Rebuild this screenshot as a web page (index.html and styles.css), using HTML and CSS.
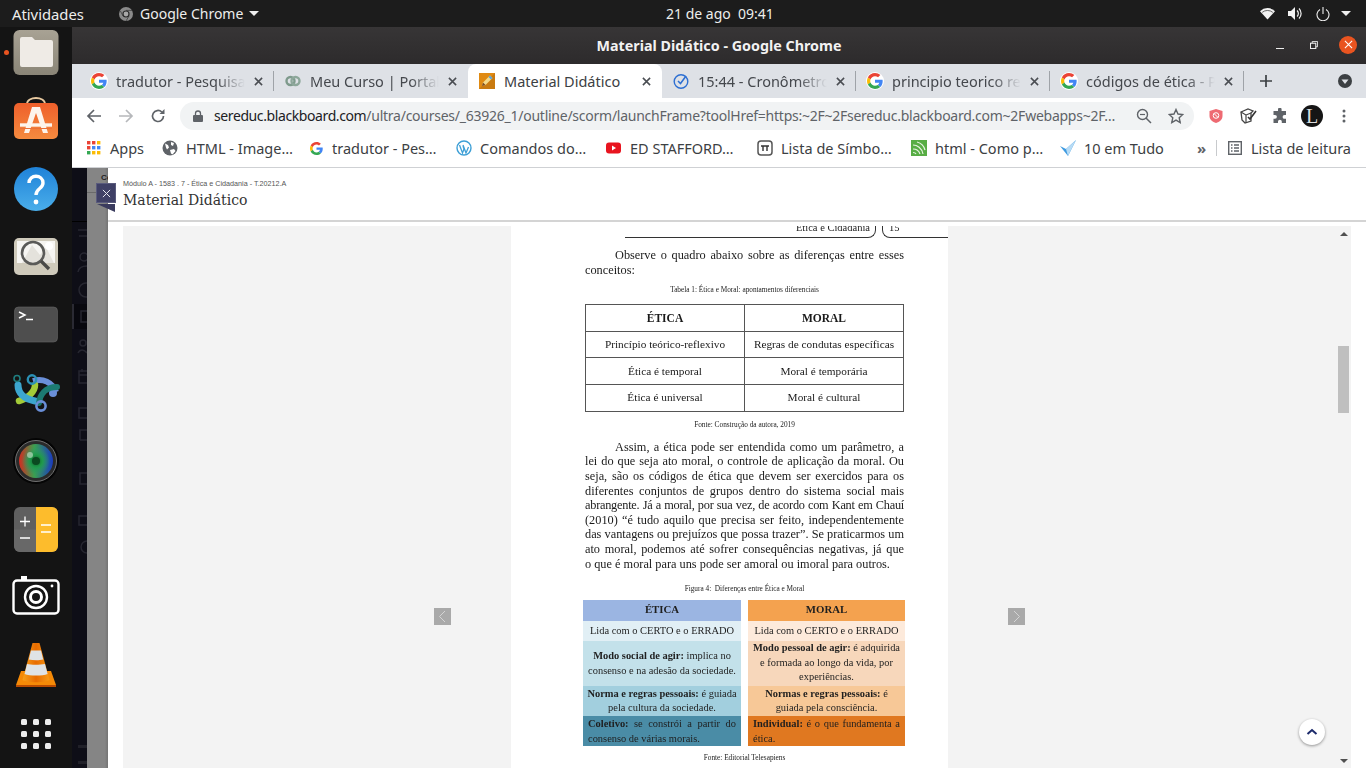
FILE: index.html
```html
<!DOCTYPE html>
<html lang="pt-BR">
<head>
<meta charset="utf-8">
<title>Material Didático - Google Chrome</title>
<link rel="stylesheet" href="styles.css">
</head>
<body>
<svg class="defs" aria-hidden="true">
  <symbol id="g" viewBox="0 0 48 48">
    <path fill="#EA4335" d="M24 9.5c3.54 0 6.71 1.22 9.21 3.6l6.85-6.85C35.9 2.38 30.47 0 24 0 14.62 0 6.51 5.38 2.56 13.22l7.98 6.19C12.43 13.72 17.74 9.5 24 9.5z"/>
    <path fill="#4285F4" d="M46.98 24.55c0-1.57-.15-3.09-.38-4.55H24v9.02h12.94c-.58 2.96-2.26 5.48-4.78 7.18l7.73 6c4.51-4.18 7.09-10.36 7.09-17.65z"/>
    <path fill="#FBBC05" d="M10.53 28.59c-.48-1.45-.76-2.99-.76-4.59s.27-3.14.76-4.59l-7.98-6.19C.92 16.46 0 20.12 0 24c0 3.88.92 7.54 2.56 10.78l7.97-6.19z"/>
    <path fill="#34A853" d="M24 48c6.48 0 11.93-2.13 15.89-5.81l-7.73-6c-2.15 1.45-4.92 2.3-8.16 2.3-6.26 0-11.57-4.22-13.47-9.91l-7.98 6.19C6.51 42.62 14.62 48 24 48z"/>
  </symbol>
  <symbol id="x" viewBox="0 0 10 10"><path d="M1 1l8 8M9 1l-8 8" stroke="#4a4d52" stroke-width="1.7" fill="none"/></symbol>
</svg>

<header class="topbar">
  <span class="activities">Atividades</span>
  <span class="appmenu">
    <svg class="chrome-mono" viewBox="0 0 14 14"><circle cx="7" cy="7" r="7" fill="#8a8a8a"/><circle cx="7" cy="7" r="3.6" fill="#2a2a2a"/><circle cx="7" cy="7" r="2.4" fill="#a8a8a8"/><path d="M7 3.4h6M4 9l-2.6-5M10 9l-3 5" stroke="#333" stroke-width=".7"/></svg>
    <span>Google Chrome</span>
    <i class="caret"></i>
  </span>
  <span class="clock">21 de ago&nbsp;&nbsp;09:41</span>
  <span class="status">
    <svg class="st-wifi" viewBox="0 0 16 13"><path d="M0 4a11.500 11.500 0 0 1 16 0l-8 9z" fill="#f2f2f2"/><path d="M2.300 5.300a9 9 0 0 1 11.400 0" stroke="#1d1d1d" stroke-width=".7" fill="none"/></svg>
    <svg class="st-vol" viewBox="0 0 15 13"><path d="M0 4h3l4-4v13l-4-4H0z" fill="#f2f2f2"/><path d="M9 3.500a4 4 0 0 1 0 6M11 1.500a7 7 0 0 1 0 10" stroke="#f2f2f2" stroke-width="1.200" fill="none"/></svg>
    <svg class="st-pow" viewBox="0 0 14 14"><path d="M4 2.500a6 6 0 1 0 6 0" stroke="#eee" stroke-width="1.100" fill="none"/><path d="M7 0v7" stroke="#eee" stroke-width="1.100"/></svg>
    <i class="caret"></i>
  </span>
</header>

<div class="desktop">
  <nav class="dock">
    <i class="running-dot"></i>
    <svg class="dock-ic" viewBox="0 0 48 48"><defs><linearGradient id="fl" x1="0" y1="0" x2="0" y2="1"><stop offset="0" stop-color="#a8a294"/><stop offset="1" stop-color="#8a8577"/></linearGradient></defs><rect x="1.500" y="1" width="45" height="45" rx="6" fill="url(#fl)"/><path d="M8 10a2 2 0 0 1 2-2h10l3 3h16a2 2 0 0 1 2 2v23a2 2 0 0 1-2 2H10a2 2 0 0 1-2-2z" fill="#efebe6"/></svg>
    <svg class="dock-ic" viewBox="0 0 48 48"><defs><linearGradient id="sw" x1="0" y1="0" x2="0" y2="1"><stop offset="0" stop-color="#ee5f2b"/><stop offset="1" stop-color="#f58b3f"/></linearGradient></defs><g transform="translate(0,-3)"><path d="M15 10c0-8 18-8 18 0" stroke="#e8c9a0" stroke-width="1.800" fill="none"/><rect x="2" y="9" width="44" height="36" rx="5" fill="url(#sw)"/><path d="M20 13h8l8 26h-5l-7-20-7 20h-5z" fill="#fdf4ec"/><path d="M8 31h32" stroke="#fdf4ec" stroke-width="3.400"/><path d="M8 34.500h32" stroke="#e9713a" stroke-width="1"/></g></svg>
    <svg class="dock-ic" viewBox="0 0 48 48"><defs><linearGradient id="hp" x1="0" y1="0" x2="0" y2="1"><stop offset="0" stop-color="#1f82d8"/><stop offset="1" stop-color="#4aaeea"/></linearGradient></defs><circle cx="24" cy="24" r="22" fill="url(#hp)"/><path d="M17 18c0-9 14-9 14 0 0 6-7 5-7 12" stroke="#fff" stroke-width="3.400" fill="none"/><circle cx="24" cy="37" r="2.400" fill="#fff"/></svg>
    <svg class="dock-ic" viewBox="0 0 48 48"><rect x="2" y="5" width="44" height="37" rx="5" fill="#cfcabb"/><path d="M5 8h38v22H5z" fill="#f6f5f2"/><path d="M10 30l10-18 8 10 6-8 8 16z" fill="#e4e2dc"/><circle cx="37" cy="13" r="4" fill="#fff"/><circle cx="21" cy="20" r="11" fill="none" stroke="#5a5a58" stroke-width="2.600"/><path d="M29 28l8 8" stroke="#4a4a48" stroke-width="3.400"/></svg>
    <svg class="dock-ic" viewBox="0 0 48 48"><rect x="2.500" y="6" width="43" height="35" rx="4" fill="#4e4e4e" stroke="#666" stroke-width=".6"/><path d="M7 11l6 3-6 3" stroke="#fff" stroke-width="1.500" fill="none"/><path d="M14 18.500h7" stroke="#fff" stroke-width="1.500"/></svg>
    <svg class="dock-ic" viewBox="0 0 48 48"><path d="M21 12c10-3 19 1 23 11" stroke="#6a8fd8" stroke-width="6" fill="none"/><circle cx="41" cy="24" r="4" fill="#6a8fd8"/><path d="M23 16c0 7-8 14-16 16" stroke="#a3cb38" stroke-width="6.500" stroke-linecap="round" fill="none"/><path d="M6 16c0 8 6 14 17 16" stroke="#3ca6cf" stroke-width="7" stroke-linecap="round" fill="none"/><path d="M45 18c-12 0-17 8-18 16" stroke="#1c7b72" stroke-width="6" stroke-linecap="round" fill="none"/><circle cx="5" cy="9.500" r="3" fill="none" stroke="#1f7f80" stroke-width="1.600"/><circle cx="20" cy="10.500" r="4.200" fill="none" stroke="#2b90b5" stroke-width="2.400"/><circle cx="29" cy="37" r="4.600" fill="none" stroke="#6a8fd8" stroke-width="2.600"/></svg>
    <svg class="dock-ic" viewBox="0 0 48 48"><defs><radialGradient id="ln" cx=".5" cy=".5" r=".5"><stop offset="0" stop-color="#0c5a26"/><stop offset=".45" stop-color="#1f9a4a"/><stop offset="1" stop-color="#2a9a70" stop-opacity="0"/></radialGradient><linearGradient id="lr" x1="0" y1="0" x2="1" y2="0"><stop offset="0" stop-color="#d42a20"/><stop offset=".45" stop-color="#3aa050"/><stop offset="1" stop-color="#1a3ac0"/></linearGradient></defs><circle cx="24" cy="24" r="23" fill="#050505"/><circle cx="24" cy="24" r="20.500" fill="#2a2a2a" stroke="#888" stroke-width=".8"/><circle cx="24" cy="24" r="17" fill="url(#lr)"/><circle cx="24" cy="24" r="14" fill="url(#ln)"/><circle cx="24" cy="24" r="4" fill="#0a4a20"/><circle cx="18" cy="18" r="3" fill="#cfe4cf" opacity=".6"/></svg>
    <svg class="dock-ic" viewBox="0 0 48 48"><rect x="2" y="2" width="44" height="45" rx="6" fill="#5f5f5f"/><path d="M24 2h16a6 6 0 0 1 6 6v33a6 6 0 0 1-6 6H24z" fill="#fdbc2c"/><path d="M2 24.500h22V47H8a6 6 0 0 1-6-6z" fill="#686868"/><path d="M8 16.500h10M13 11.500v10M8 33h10" stroke="#fff" stroke-width="1.300"/><path d="M29 20h10M29 27h10" stroke="#fff" stroke-width="1.300"/></svg>
    <svg class="dock-ic" viewBox="0 0 48 48"><rect x="1.500" y="7.500" width="45" height="33" rx="3.500" fill="none" stroke="#fff" stroke-width="2.400"/><rect x="9" y="3" width="6" height="4" fill="#fff"/><circle cx="24" cy="24" r="11" fill="none" stroke="#fff" stroke-width="2.400"/><circle cx="24" cy="24" r="5.500" fill="none" stroke="#fff" stroke-width="3"/><circle cx="40" cy="13" r="1.400" fill="#fff"/></svg>
    <svg class="dock-ic" viewBox="0 0 48 48"><defs><linearGradient id="vc" x1="0" y1="0" x2="1" y2="0"><stop offset="0" stop-color="#f7a11c"/><stop offset=".5" stop-color="#e86c00"/><stop offset="1" stop-color="#f79a16"/></linearGradient></defs><path d="M9 30h30l5 14c0 1-1 2-2 2H6c-1 0-2-1-2-2z" fill="#f58a07"/><path d="M4 44h40v2H4z" fill="#b94a00"/><path d="M20.500 2h7l10 37c-5 3-22 3-27 0z" fill="url(#vc)"/><path d="M19 9.500h10l2.200 9c-4 1-10 1-14.400 0z" fill="#dfe3e6"/><path d="M15 23c4 1 13 1 18 0l2.600 10c-5 2-18 2-23 0z" fill="#dfe3e6"/></svg>
    <svg class="dock-ic" viewBox="0 0 48 48"><g fill="#ededed"><rect x="9" y="10" width="6" height="6" rx="1.500"/><rect x="21" y="10" width="6" height="6" rx="1.500"/><rect x="33" y="10" width="6" height="6" rx="1.500"/><rect x="9" y="22" width="6" height="6" rx="1.500"/><rect x="21" y="22" width="6" height="6" rx="1.500"/><rect x="33" y="22" width="6" height="6" rx="1.500"/><rect x="9" y="34" width="6" height="6" rx="1.500"/><rect x="21" y="34" width="6" height="6" rx="1.500"/><rect x="33" y="34" width="6" height="6" rx="1.500"/></g></svg>
  </nav>

  <main class="window">
    <div class="titlebar">
      <span></span>
      <strong class="wintitle">Material Didático - Google Chrome</strong>
      <span class="winbtns">
        <i class="wb-min"></i>
        <svg class="wb-max" viewBox="0 0 9 9"><path d="M2.500 2.500V.5h6v6h-2" fill="none" stroke="#eee" stroke-width="1"/><rect x=".5" y="2.500" width="6" height="6" fill="none" stroke="#eee" stroke-width="1.200"/></svg>
        <span class="wb-close"><svg viewBox="0 0 10 10"><path d="M1 1l8 8M9 1l-8 8" stroke="#fff" stroke-width="1.200"/></svg></span>
      </span>
    </div>

    <div class="tabstrip">
      <div class="tab">
        <span class="fav"><svg><use href="#g"/></svg></span>
        <span class="tabtext">tradutor - Pesquisa Google</span>
        <svg class="tabx"><use href="#x"/></svg>
      </div>
      <div class="tab">
        <span class="fav plain"><svg viewBox="0 0 16 16"><circle cx="5.500" cy="8" r="4" fill="none" stroke="#7e9a8c" stroke-width="2.400"/><circle cx="10.500" cy="8" r="4" fill="none" stroke="#8da79a" stroke-width="2.400"/></svg></span>
        <span class="tabtext">Meu Curso | Portal do Aluno</span>
        <svg class="tabx"><use href="#x"/></svg>
      </div>
      <div class="tab active">
        <span class="fav plain"><svg viewBox="0 0 16 16"><rect width="16" height="16" fill="#e08a12"/><path d="M0 16L16 0v16z" fill="#c97a10"/><path d="M3 13l1-3.500 7-7 2.500 2.500-7 7z" fill="#f3d98a"/><path d="M9.500 4l2.500 2.500 1.500-1.500L11 2.500z" fill="#5ea3d8"/><path d="M3 13l1-3.500 2.500 2.500z" fill="#7a4a20"/></svg></span>
        <span class="tabtext">Material Didático</span>
        <svg class="tabx"><use href="#x"/></svg>
      </div>
      <div class="tab">
        <span class="fav plain"><svg viewBox="0 0 16 16"><circle cx="8" cy="8.500" r="6.800" fill="none" stroke="#2d6fd2" stroke-width="1.400"/><path d="M5 8l2.500 2.500L13 3" fill="none" stroke="#2d6fd2" stroke-width="1.500"/></svg></span>
        <span class="tabtext">15:44 - Cronômetro online</span>
        <svg class="tabx"><use href="#x"/></svg>
      </div>
      <div class="tab">
        <span class="fav"><svg><use href="#g"/></svg></span>
        <span class="tabtext">principio teorico reflexivo</span>
        <svg class="tabx"><use href="#x"/></svg>
      </div>
      <div class="tab">
        <span class="fav"><svg><use href="#g"/></svg></span>
        <span class="tabtext">códigos de ética - Pesquisa</span>
        <svg class="tabx"><use href="#x"/></svg>
      </div>
      <svg class="newtab" viewBox="0 0 12 12"><path d="M6 0v12M0 6h12" stroke="#3c4043" stroke-width="1.700"/></svg>
      <svg class="tabmenu" viewBox="0 0 14 14"><circle cx="7" cy="7" r="7" fill="#3c4043"/><path d="M3.500 5.500h7L7 10z" fill="#dee1e6"/></svg>
    </div>

    <div class="toolbar">
      <span class="tb"><svg class="ic16" viewBox="0 0 16 16"><path d="M15 8H2M8 2L2 8l6 6" fill="none" stroke="#5f6368" stroke-width="1.700"/></svg></span>
      <span class="tb"><svg class="ic16" viewBox="0 0 16 16"><path d="M1 8h13M8 2l6 6-6 6" fill="none" stroke="#b6b8bb" stroke-width="1.700"/></svg></span>
      <span class="tb"><svg class="ic16" viewBox="0 0 16 16"><path d="M13.500 8a5.500 5.500 0 1 1-1.700-4" fill="none" stroke="#5f6368" stroke-width="1.700"/><path d="M14.500 1v5h-5z" fill="#5f6368"/></svg></span>
      <div class="omnibox">
        <svg class="lock" viewBox="0 0 10 12"><rect y="5" width="10" height="7" rx="1" fill="#5f6368"/><path d="M2.500 5V3.500a2.500 2.500 0 0 1 5 0V5" fill="none" stroke="#5f6368" stroke-width="1.300"/></svg>
        <span class="url"><b>sereduc.blackboard.com</b>/ultra/courses/_63926_1/outline/scorm/launchFrame?toolHref=https:~2F~2Fsereduc.blackboard.com~2Fwebapps~2F…</span>
        <span class="tb"><svg class="ic16" viewBox="0 0 16 16"><circle cx="6.500" cy="6.500" r="5" fill="none" stroke="#5f6368" stroke-width="1.400"/><path d="M10 10l5 5" stroke="#5f6368" stroke-width="1.500"/><path d="M4 6.500h5" stroke="#5f6368" stroke-width="1.200"/></svg></span>
        <span class="tb"><svg class="ic16" viewBox="0 0 16 16"><path d="M8 1.500l2 4.500 4.800.5-3.600 3.200 1 4.800L8 12.100l-4.200 2.400 1-4.800L1.200 6.500 6 6z" fill="none" stroke="#5f6368" stroke-width="1.400"/></svg></span>
      </div>
      <div class="exts">
        <span class="tb"><svg class="ic16" viewBox="0 0 16 16"><path d="M8 1l6.500 2v5c0 3.500-3 6-6.500 7C4.500 14 1.500 11.500 1.500 8V3z" fill="#ee6a72"/><circle cx="8" cy="7.500" r="2.800" fill="none" stroke="#fff" stroke-width="1"/><path d="M6 5.500l4 4" stroke="#fff" stroke-width="1"/></svg></span>
        <span class="tb"><svg class="ic18" viewBox="0 0 18 18"><path d="M2 5l7-3 5 2-2 2 0 8-6 2-3-3z" fill="#fff" stroke="#444" stroke-width="1.300"/><path d="M2 5l5 3v8M7 8l5-2" stroke="#444" stroke-width="1.200" fill="none"/><path d="M9 10l2 2 6-8" stroke="#333" stroke-width="1.600" fill="none"/></svg></span>
        <span class="tb"><svg class="ic16" viewBox="0 0 16 16"><path d="M6 1.500a1.800 1.800 0 0 1 3.600 0V3H14v4h-1.500a1.900 1.900 0 0 0 0 3.800H14V15H9.800v-1.400a1.900 1.900 0 0 0-3.800 0V15H1.500v-4.300H3a1.900 1.900 0 0 0 0-3.800H1.500V3H6z" fill="#5f6368"/></svg></span>
        <span class="tb"><span class="avatar">L</span></span>
        <span class="tb"><svg class="ic16" viewBox="0 0 16 16"><circle cx="8" cy="3" r="1.500" fill="#5f6368"/><circle cx="8" cy="8" r="1.500" fill="#5f6368"/><circle cx="8" cy="13" r="1.500" fill="#5f6368"/></svg></span>
      </div>
    </div>

    <div class="bookmarks">
      <span class="bm"><svg class="bmic apps" viewBox="0 0 14 14"><g><rect width="3.400" height="3.400" fill="#ea4335"/><rect x="5" width="3.400" height="3.400" fill="#ea4335"/><rect x="10" width="3.400" height="3.400" fill="#fbbc05"/><rect y="5" width="3.400" height="3.400" fill="#ea4335"/><rect x="5" y="5" width="3.400" height="3.400" fill="#4285f4"/><rect x="10" y="5" width="3.400" height="3.400" fill="#4285f4"/><rect y="10" width="3.400" height="3.400" fill="#34a853"/><rect x="5" y="10" width="3.400" height="3.400" fill="#fbbc05"/><rect x="10" y="10" width="3.400" height="3.400" fill="#fbbc05"/></g></svg>Apps</span>
      <span class="bm"><svg class="bmic" viewBox="0 0 16 16"><circle cx="8" cy="8" r="7.500" fill="#5f6368"/><path d="M3 3.500l3 1.500 1 2.500L5 9.500l-1-2zM9 2l3 1-1 3-2-1zM8 10l4-1 1.500 2-3 3.500-1.500-1z" fill="#fff"/></svg>HTML - Image…</span>
      <span class="bm"><svg class="bmic g13"><use href="#g"/></svg>tradutor - Pes…</span>
      <span class="bm"><svg class="bmic" viewBox="0 0 16 16"><circle cx="8" cy="8" r="7" fill="none" stroke="#3d9fd6" stroke-width="1.400"/><path d="M3.500 5l3 8 1.500-4-1-3M7 5l3 8 2.500-6" fill="none" stroke="#3d9fd6" stroke-width="1.300"/></svg>Comandos do…</span>
      <span class="bm"><svg class="bmic" viewBox="0 0 16 12"><rect width="15" height="11" y=".5" rx="3" fill="#e8141f"/><path d="M6 3.500l4 2.500-4 2.500z" fill="#fff"/></svg>ED STAFFORD…</span>
      <span class="bm"><svg class="bmic" viewBox="0 0 16 16"><rect x="1" y="1" width="14" height="14" rx="3" fill="#fff" stroke="#555" stroke-width="1.500"/><path d="M4 6h8M6 6v5M10 6v5" stroke="#333" stroke-width="1.400"/></svg>Lista de Símbo…</span>
      <span class="bm"><svg class="bmic" viewBox="0 0 16 16"><rect width="16" height="16" fill="#58ad45"/><path d="M2 5c4 0 9 3 10 9M2 9c3 0 6 2 7 5M2 12.500c1.500 0 2.500.5 3 1.500M6 2c4 1 7 4 8 8" stroke="#e7f4e2" stroke-width="1.200" fill="none"/></svg>html - Como p…</span>
      <span class="bm"><svg class="bmic" viewBox="0 0 16 16"><path d="M0 6l6 3 10-9-8 16z" fill="#3f9be0"/><path d="M6 9l10-9-8 16z" fill="#b7dbf5"/></svg>10 em Tudo</span>
      <span class="bm-more">»</span>
      <i class="bm-sep"></i>
      <span class="bm bm-read"><svg class="bmic" viewBox="0 0 14 14"><rect x=".7" y=".7" width="12.600" height="12.600" fill="none" stroke="#5f6368" stroke-width="1.400"/><path d="M3 4h1.500M6 4h5M3 7h1.500M6 7h5M3 10h1.500M6 10h5" stroke="#5f6368" stroke-width="1.300"/></svg>Lista de leitura</span>
    </div>

    <div class="content">
      <div class="bg-dark">
        <svg class="bg-icons" viewBox="0 0 15 600" preserveAspectRatio="xMinYMin"><rect y="136" width="15" height="25" fill="#08080e"/><rect y="136" width="2" height="25" fill="#2a2a33"/><rect y="53" width="15" height="1" fill="#000"/><g fill="none" stroke="#262630" stroke-width="1.500"><path d="M6 62h9M7 68h8"/><circle cx="12" cy="89" r="4"/><path d="M6 104c1-6 6-6 9-6"/><circle cx="14" cy="122" r="7"/><rect x="9" y="143" width="8" height="11"/><circle cx="11" cy="175" r="3"/><path d="M6 185c2-4 6-4 9 0"/><rect x="7" y="203" width="10" height="12"/><path d="M7 207h8M10 201v3"/><rect x="7" y="240" width="10" height="10"/><path d="M8 272v-10h9M8 272h9"/><rect x="8" y="305" width="9" height="11"/><rect x="7" y="348" width="10" height="9"/><circle cx="15" cy="379" r="6"/></g><g fill="#202028"><rect x="6" y="577" width="9" height="3"/><rect x="6" y="593" width="9" height="3"/></g></svg>
      </div>
      <div class="bg-gray"><span class="bg-co">Co</span><i class="bg-rule"></i></div>
      <section class="panel">
        <header class="panelhead">
          <p class="crumb">Módulo A - 1583 . 7 - Ética e Cidadania - T.20212.A</p>
          <h1 class="paneltitle">Material Didático</h1>
        </header>
        <div class="pane">
          <div class="docarea">
            <article class="page">
              <div class="runhead">
                <div class="rh-left">Ética e Cidadania</div>
                <div class="rh-right">15</div>
              </div>
              <div class="body">
                <p class="para p1">
                  <span class="ln indent">Observe o quadro abaixo sobre as diferenças entre esses</span>
                  <span class="ln last">conceitos:</span>
                </p>
                <p class="cap cap-t">Tabela 1: Ética e Moral: apontamentos diferenciais</p>
                <table class="tbl">
                  <tr><th>ÉTICA</th><th>MORAL</th></tr>
                  <tr><td>Princípio teórico-reflexivo</td><td>Regras de condutas específicas</td></tr>
                  <tr><td>Ética é temporal</td><td>Moral é temporária</td></tr>
                  <tr><td>Ética é universal</td><td>Moral é cultural</td></tr>
                </table>
                <p class="cap cap-f">Fonte: Construção da autora, 2019</p>
                <p class="para p2">
                  <span class="ln indent">Assim, a ética pode ser entendida como um parâmetro, a</span>
                  <span class="ln">lei do que seja ato moral, o controle de aplicação da moral. Ou</span>
                  <span class="ln">seja, são os códigos de ética que devem ser exercidos para os</span>
                  <span class="ln">diferentes conjuntos de grupos dentro do sistema social mais</span>
                  <span class="ln tight">abrangente. Já a moral, por sua vez, de acordo com Kant em Chauí</span>
                  <span class="ln">(2010) “é tudo aquilo que precisa ser feito, independentemente</span>
                  <span class="ln">das vantagens ou prejuízos que possa trazer”. Se praticarmos um</span>
                  <span class="ln">ato moral, podemos até sofrer consequências negativas, já que</span>
                  <span class="ln last">o que é moral para uns pode ser amoral ou imoral para outros.</span>
                </p>
                <p class="cap cap-g">Figura 4:&nbsp; Diferenças entre Ética e Moral</p>
                <div class="fig">
                  <div class="fc fh l0"><b>ÉTICA</b></div>
                  <div class="fc fh r0"><b>MORAL</b></div>
                  <div class="fc f1 l1">Lida com o CERTO e o ERRADO</div>
                  <div class="fc f1 r1">Lida com o CERTO e o ERRADO</div>
                  <div class="fc f2 l2"><span><b>Modo social de agir:</b> implica no consenso e na adesão da sociedade.</span></div>
                  <div class="fc f2 r2"><span><b>Modo pessoal de agir:</b> é adquirida e formada ao longo da vida, por experiências.</span></div>
                  <div class="fc f3 l3"><span><b>Norma e regras pessoais:</b> é guiada pela cultura da sociedade.</span></div>
                  <div class="fc f3 r3"><span><b>Normas e regras pessoais:</b> é guiada pela consciência.</span></div>
                  <div class="fc f4 l4"><span class="ln"><b>Coletivo:</b> se constrói a partir do</span><span class="ln last">consenso de várias morais.</span></div>
                  <div class="fc f4 r4"><span class="ln"><b>Individual:</b> é o que fundamenta a</span><span class="ln last">ética.</span></div>
                </div>
                <p class="cap cap-e">Fonte: Editorial Telesapiens</p>
              </div>
            </article>
            <span class="navarrow prev"><svg viewBox="0 0 17 17"><path d="M11 3L5.500 8.500 11 14" fill="none" stroke="#d4d4d4" stroke-width="1"/></svg></span>
            <span class="navarrow next"><svg viewBox="0 0 17 17"><path d="M6 3l5.500 5.500L6 14" fill="none" stroke="#d4d4d4" stroke-width="1"/></svg></span>
            <span class="uptop"><svg viewBox="0 0 12 8"><path d="M1.500 6L6 2l4.500 4" fill="none" stroke="#1c2a6b" stroke-width="2"/></svg></span>
          </div>
          <div class="scrollbar">
            <i class="sb-up"></i>
            <i class="sb-thumb"></i>
            <i class="sb-down"></i>
          </div>
        </div>
      </section>
      <span class="closebadge"><svg viewBox="0 0 10 10"><path d="M1 1l8 8M9 1l-8 8" stroke="#e8e8f0" stroke-width="1.100"/></svg></span>
    </div>
  </main>
</div>
</body>
</html>
```

FILE: styles.css
```css
* { box-sizing: border-box; }
html, body { margin: 0; padding: 0; width: 1366px; height: 768px; overflow: hidden; }
body { display: flex; flex-direction: column; background: #141414; font-family: "Noto Sans", "Open Sans", sans-serif; font-size: 14px; color: #3c4043; }
.defs { width: 0; height: 0; position: absolute; }
p, h1 { margin: 0; }

.topbar { height: 27px; flex: none; background: #1c1c1c; color: #eeeeec; display: flex; align-items: center; font-size: 14px; }
.activities { margin-left: 12px; width: 107px; font-size: 14.800px; }
.appmenu { display: flex; align-items: center; width: 547px; }
.chrome-mono { width: 14px; height: 14px; margin-right: 7px; }
.caret { display: inline-block; width: 0; height: 0; border-left: 5px solid transparent; border-right: 5px solid transparent; border-top: 5px solid #eee; }
.appmenu .caret { margin-left: 6px; }
.clock { width: 594px; white-space: nowrap; }
.status { display: flex; align-items: center; }
.st-wifi { width: 15px; height: 13px; }
.st-vol { width: 15px; height: 13px; margin-left: 13px; }
.st-pow { width: 14px; height: 14px; margin-left: 13px; }
.status .caret { margin-left: 11px; }

.desktop { flex: 1; display: flex; min-height: 0; }
.dock { width: 72px; flex: none; background: #141414; display: flex; flex-direction: column; align-items: center; padding-top: 2px; gap: 20px; position: relative; }
.dock-ic { width: 48px; height: 48px; flex: none; }
.running-dot { position: absolute; left: 4px; top: 23px; width: 5px; height: 5px; border-radius: 50%; background: #e95420; }

.window { flex: 1; min-width: 0; display: flex; flex-direction: column; }
.titlebar { height: 37px; flex: none; background: linear-gradient(#373536, #2d2b2c); display: grid; grid-template-columns: 1fr auto 1fr; align-items: center; }
.wintitle { color: #f2f2f2; font-size: 14.300px; font-weight: 700; }
.winbtns { display: flex; align-items: center; justify-content: flex-end; }
.wb-min { width: 8px; height: 1px; background: #eee; margin-top: 5px; margin-right: 26px; }
.wb-max { width: 8px; height: 8px; margin-right: 21px; margin-top: -2px; }
.wb-close { width: 18px; height: 18px; border-radius: 50%; background: #e95420; display: flex; align-items: center; justify-content: center; margin-right: 9px; margin-top: -2px; }
.wb-close svg { width: 9px; height: 9px; }

.tabstrip { height: 34px; flex: none; background: #dee1e6; display: flex; align-items: stretch; padding-left: 8px; }
.tab { width: 194px; flex: none; display: flex; align-items: center; padding-left: 11px; position: relative; color: #45484d; font-size: 14.500px; }
.tab::after { content: ""; position: absolute; right: 0; top: 7px; height: 20px; width: 1px; background: #9fa3a8; }
.tab.active { background: #fff; border-radius: 8px 8px 0 0; color: #3c4043; }
.tab:nth-child(2)::after, .tab:nth-child(3)::after { display: none; }
.fav { width: 16px; height: 16px; border-radius: 50%; background: #fff; box-shadow: 0 0 0 1px #fff; display: flex; flex: none; }
.fav.plain { background: none; box-shadow: none; border-radius: 0; }
.fav svg { width: 16px; height: 16px; }
.tabtext { margin-left: 9px; width: 129px; white-space: nowrap; overflow: hidden; -webkit-mask-image: linear-gradient(90deg, #000 78%, transparent 100%); mask-image: linear-gradient(90deg, #000 78%, transparent 100%); }
.active .tabtext { -webkit-mask-image: none; mask-image: none; }
.tabx { width: 9px; height: 9px; margin-left: 9px; flex: none; }
.newtab { width: 12px; height: 12px; align-self: center; margin-left: 16px; }
.tabmenu { width: 14px; height: 14px; align-self: center; margin-left: 66px; }

.toolbar { height: 35px; flex: none; background: #fff; display: flex; align-items: center; padding-left: 6px; }
.tb { width: 32px; height: 28px; flex: none; display: flex; align-items: center; justify-content: center; }
.ic16 { width: 16px; height: 16px; }
.ic18 { width: 18px; height: 18px; }
.omnibox { margin-left: 6px; width: 1014px; height: 28px; flex: none; border-radius: 14px; background: #f1f3f4; display: flex; align-items: center; padding: 0 2px 0 13px; }
.lock { width: 10px; height: 12px; flex: none; }
.url { margin-left: 11px; flex: 1; min-width: 0; white-space: nowrap; overflow: hidden; color: #5f6368; font-size: 14px; letter-spacing: -.25px; }
.url b { font-weight: 400; color: #202124; letter-spacing: -.4px; }
.exts { display: flex; margin-left: 6px; }
.avatar { width: 22px; height: 22px; border-radius: 50%; background: #151515; color: #ddd; font-family: "Liberation Serif", serif; font-size: 20px; line-height: 22px; text-align: center; display: block; }

.bookmarks { height: 35px; flex: none; background: #fff; border-bottom: 1px solid #cfd1d4; display: grid; grid-template-columns: 75px 148px 146px 150px 151px 154px 149px 137px 19px 1px 1fr; align-items: center; padding: 0 0 4px 15px; font-size: 14.500px; white-space: nowrap; }
.bm { display: flex; align-items: center; }
.bmic { width: 16px; height: 16px; flex: none; margin-right: 8px; }
.bmic.apps { width: 14px; height: 14px; margin-right: 9px; }
.bmic.g13 { width: 13px; height: 13px; margin-right: 9px; }
.bm-more { font-size: 15px; font-weight: 700; color: #5f6368; }
.bm-sep { width: 1px; height: 16px; background: #c8cacd; }
.bm-read { margin-left: 11px; }
.bm-read .bmic { width: 14px; height: 14px; margin-right: 9px; }

.content { flex: 1; min-height: 0; display: flex; position: relative; }
.bg-dark { width: 15px; flex: none; background: #0e0e17; overflow: hidden; }
.bg-icons { display: block; width: 15px; height: 600px; }
.bg-gray { width: 21px; flex: none; background: linear-gradient(90deg, #858585 85%, #747474); position: relative; overflow: hidden; }
.bg-co { position: absolute; left: 14px; top: 5px; font: 700 8px "Liberation Sans", sans-serif; color: #222; }
.bg-rule { position: absolute; left: 0; right: 0; top: 24px; height: 1px; background: #6a6a6a; }
.panel { flex: 1; min-width: 0; background: #fff; display: flex; flex-direction: column; }
.panelhead { height: 54px; flex: none; border-bottom: 2px solid #d4d4d4; padding: 11px 0 0 15px; }
.crumb { font: 7.200px/9px "Liberation Sans", sans-serif; color: #555; }
.paneltitle { font: 400 14px/18px "DejaVu Serif", serif; color: #333; margin-top: 3px; }
.pane { flex: 1; min-height: 0; margin: 4px 15px 0; background: #f3f3f3; display: flex; }
.docarea { flex: 1; min-width: 0; display: flex; justify-content: center; position: relative; overflow: hidden; }
.page { width: 437px; background: #fff; flex: none; font-family: "Liberation Serif", serif; color: #1a1a1a; filter: blur(.3px); }

.runhead { display: flex; height: 12px; font-size: 10.500px; color: #222; }
.rh-left { margin-left: 114px; width: 251px; border-right: 1px solid #333; border-bottom: 1px solid #333; border-bottom-right-radius: 8px; text-align: right; padding-right: 5px; line-height: 3px; overflow: hidden; }
.rh-right { margin-left: 6px; flex: 1; border-left: 1px solid #333; border-bottom: 1px solid #333; border-bottom-left-radius: 8px; padding-left: 6px; line-height: 3px; overflow: hidden; }
.body { padding: 0 44px 0 74px; }
.para { font-size: 12.300px; }
.ln { display: block; text-align: justify; text-align-last: justify; white-space: nowrap; }
.ln.last { text-align-last: left; }
.ln.indent { text-indent: 30px; }
.ln.tight { letter-spacing: -.24px; word-spacing: -.6px; }
.p1 { margin-top: 10px; line-height: 15px; }
.p2 { margin-top: 10px; line-height: 14.600px; }
.cap { text-align: center; font-size: 7.300px; line-height: 10px; color: #222; }
.cap-t { margin-top: 7px; }
.cap-f { margin-top: 8px; }
.cap-g { margin-top: 13px; }
.cap-e { margin-top: 7px; }
.tbl { width: 319px; margin-top: 9px; border-collapse: collapse; table-layout: fixed; font-size: 11.300px; }
.tbl th, .tbl td { border: 1px solid #555; height: 26.700px; padding: 0 0 1px; text-align: center; font-weight: 400; }
.tbl th { font-weight: 700; font-size: 11.500px; padding: 1px 0 0; }
.fig { margin: 6px -1px 0 -2px; display: grid; grid-template-columns: 158px 157px; column-gap: 7px; grid-template-rows: 21px 20px 45px 30px 30px; font-size: 10.450px; line-height: 14.500px; text-align: center; color: #1f1f1f; }
.fc { display: flex; align-items: center; justify-content: center; padding: 0 4px; }
.f4 { display: block; padding: 1px 5px 0; }
.f2 span, .f3 span { display: block; }
.f2.r2 { align-items: flex-start; }
.fh { font-size: 10.800px; padding-bottom: 2px; }
.l0 { background: #9bb5e2; } .r0 { background: #f4a24f; }
.l1 { background: #e1eff5; } .r1 { background: #fdeadb; }
.l2 { background: #c3e1ea; } .r2 { background: #f7d7bb; }
.l3 { background: #a2cfde; } .r3 { background: #f7c897; }
.l4 { background: #4a8ca6; } .r4 { background: #e07820; }

.navarrow { position: absolute; top: 382px; width: 17px; height: 17px; background: #a9a9a9; display: flex; }
.navarrow svg { width: 17px; height: 17px; }
.prev { left: 311px; }
.next { left: 885px; }
.uptop { position: absolute; left: 1176px; top: 493px; width: 26px; height: 26px; border-radius: 50%; background: #fff; box-shadow: 0 1px 3px rgba(0,0,0,.4); display: flex; align-items: center; justify-content: center; }
.uptop svg { width: 12px; height: 8px; }

.scrollbar { width: 15px; flex: none; display: flex; flex-direction: column; align-items: center; padding-top: 6px; position: relative; }
.sb-up { width: 0; height: 0; border-left: 4px solid transparent; border-right: 4px solid transparent; border-bottom: 4px solid #505050; flex: none; }
.sb-thumb { width: 11px; height: 67px; background: #bfbfbf; margin-top: 110px; margin-left: -1px; flex: none; }
.sb-down { width: 0; height: 0; border-left: 4px solid transparent; border-right: 4px solid transparent; border-top: 4px solid #505050; margin-top: 346px; flex: none; }

.closebadge { position: absolute; left: 24px; top: 15px; width: 20px; height: 20px; background: #3f4066; border: 1px solid #5a5b7d; display: flex; align-items: center; justify-content: center; }
.closebadge svg { width: 9px; height: 9px; }
.closebadge::after { content: ""; position: absolute; left: 0; top: 20px; border-top: 8px solid #3a3b5e; border-left: 18px solid transparent; }
```
